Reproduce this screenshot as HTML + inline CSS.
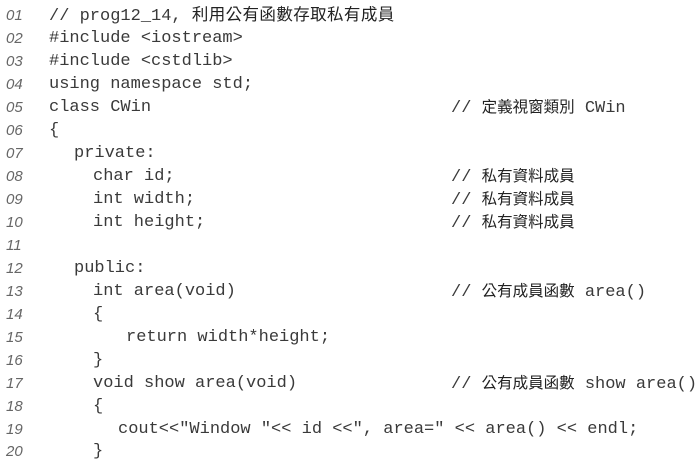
<!DOCTYPE html>
<html><head><meta charset="utf-8"><style>
body{margin:0;width:700px;height:458px;background:#fff;overflow:hidden;position:relative}
.l{position:absolute;height:23px;line-height:23px;white-space:pre;font-family:"Liberation Mono","Noto Sans CJK TC",monospace;font-size:17px;color:#3a3a3a}
.n{position:absolute;left:6px;height:23px;line-height:23px;font-family:"Liberation Sans",sans-serif;font-style:italic;font-size:15px;color:#666}
.c{font-family:"Liberation Sans","Noto Sans CJK TC",sans-serif;font-size:15.5px;color:#222}
</style></head><body>
<div class="n" style="top:4px">01</div><div class="l" style="top:4px;left:49px">// prog12_14, <span class="c" style="font-size:16.5px;letter-spacing:0.4px">利用公有函數存取私有成員</span></div>
<div class="n" style="top:27px">02</div><div class="l" style="top:27px;left:49px">#include &lt;iostream&gt;</div>
<div class="n" style="top:50px">03</div><div class="l" style="top:50px;left:49px">#include &lt;cstdlib&gt;</div>
<div class="n" style="top:73px">04</div><div class="l" style="top:73px;left:49px">using namespace std;</div>
<div class="n" style="top:96px">05</div><div class="l" style="top:96px;left:49px">class CWin</div><div class="l" style="top:96px;left:451px">// <span class="c">定義視窗類別</span> CWin</div>
<div class="n" style="top:119px">06</div><div class="l" style="top:119px;left:49px">{</div>
<div class="n" style="top:142px">07</div><div class="l" style="top:142px;left:74px">private:</div>
<div class="n" style="top:165px">08</div><div class="l" style="top:165px;left:93px">char id;</div><div class="l" style="top:165px;left:451px">// <span class="c">私有資料成員</span></div>
<div class="n" style="top:188px">09</div><div class="l" style="top:188px;left:93px">int width;</div><div class="l" style="top:188px;left:451px">// <span class="c">私有資料成員</span></div>
<div class="n" style="top:211px">10</div><div class="l" style="top:211px;left:93px">int height;</div><div class="l" style="top:211px;left:451px">// <span class="c">私有資料成員</span></div>
<div class="n" style="top:234px">11</div>
<div class="n" style="top:257px">12</div><div class="l" style="top:257px;left:74px">public:</div>
<div class="n" style="top:280px">13</div><div class="l" style="top:280px;left:93px">int area(void)</div><div class="l" style="top:280px;left:451px">// <span class="c">公有成員函數</span> area()</div>
<div class="n" style="top:303px">14</div><div class="l" style="top:303px;left:93px">{</div>
<div class="n" style="top:326px">15</div><div class="l" style="top:326px;left:126px">return width*height;</div>
<div class="n" style="top:349px">16</div><div class="l" style="top:349px;left:93px">}</div>
<div class="n" style="top:372px">17</div><div class="l" style="top:372px;left:93px">void show area(void)</div><div class="l" style="top:372px;left:451px">// <span class="c">公有成員函數</span> show area()</div>
<div class="n" style="top:395px">18</div><div class="l" style="top:395px;left:93px">{</div>
<div class="n" style="top:418px">19</div><div class="l" style="top:418px;left:118px">cout&lt;&lt;"Window "&lt;&lt; id &lt;&lt;", area=" &lt;&lt; area() &lt;&lt; endl;</div>
<div class="n" style="top:440px">20</div><div class="l" style="top:440px;left:93px">}</div>
</body></html>
